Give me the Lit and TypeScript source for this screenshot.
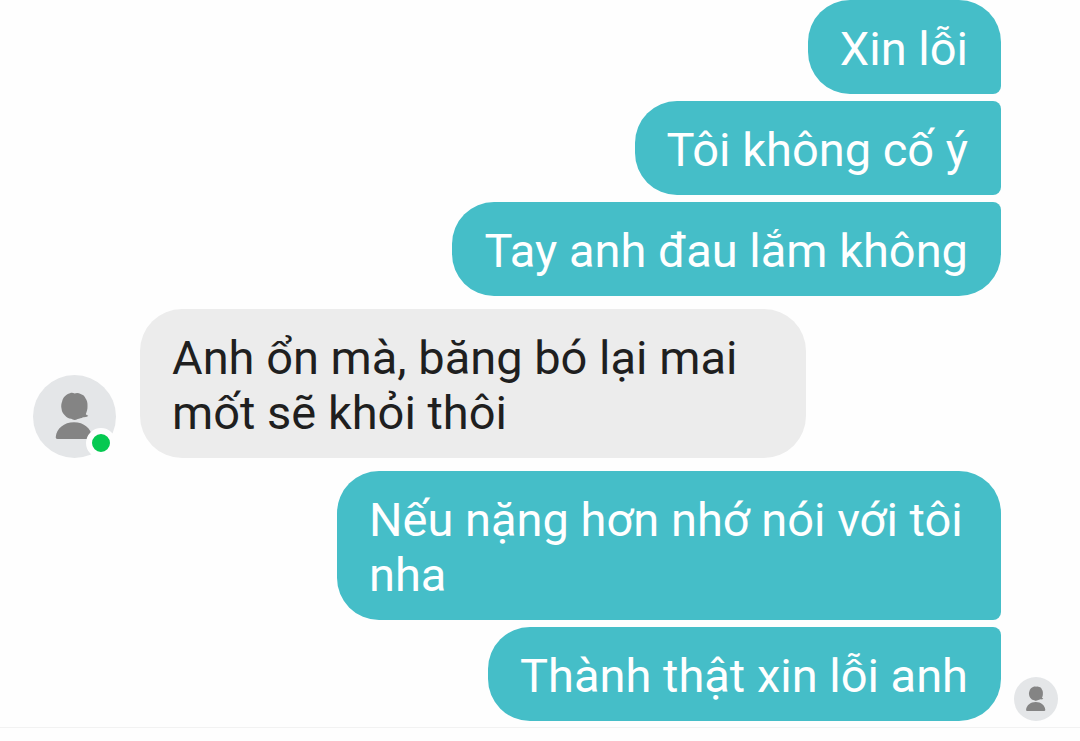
import { LitElement, html, css } from "lit";
import { customElement, property } from "lit/decorators.js";
import { classMap } from "lit/directives/class-map.js";

interface Group {
  from: "me" | "them";
  messages: string[];
  seen?: boolean;
}

const conversation: Group[] = [
  { from: "me", messages: ["Xin lỗi", "Tôi không cố ý", "Tay anh đau lắm không"] },
  { from: "them", messages: ["Anh ổn mà, băng bó lại mai mốt sẽ khỏi thôi"] },
  { from: "me", messages: ["Nếu nặng hơn nhớ nói với tôi nha", "Thành thật xin lỗi anh"], seen: true },
];

@customElement("chat-avatar")
export class ChatAvatar extends LitElement {
  @property({ type: Boolean }) online = false;

  static styles = css`
    :host {
      display: block;
      position: relative;
    }
    .face {
      display: block;
      width: 100%;
    }
    .status {
      position: absolute;
      right: 0;
      bottom: 0;
      box-sizing: border-box;
      width: 30px;
      height: 30px;
      border: 6px solid #fefefe;
      border-radius: 50%;
      background: #05c951;
    }
  `;

  render() {
    return html`
      <svg class="face" viewBox="0 0 83 83" aria-hidden="true">
        <circle cx="41.5" cy="41.5" r="41.5" fill="#e4e6e8" />
        <path
          fill="#848484"
          d="M37 18.2C38.6 17.5 40.2 17.8 41.6 18.4C43.6 17.5 46 17.8 47.6 19C50 19.6 51.8 21.2 52.6 23.6C54 25.6 54.7 28 54.5 31C54.7 34.4 53.6 37 52.8 39C53.4 40 54.3 40.4 55.3 40.6C54.8 41.8 52.6 42.4 50 42.2C48.4 43.4 46.4 43.4 44.6 44C42.6 45.3 40 45.2 38.2 43.8C35.6 43.4 33.4 42.2 32 40.4C30 39 28.8 36.6 28.5 33.6C27.9 31 28.3 28.4 29.2 26.2C29.8 22.8 32.6 19.4 37 18.2Z"
        />
        <path
          fill="#848484"
          d="M24.5 64C23.2 64 22.6 63.2 22.8 61.8C23.6 53.5 31 47.3 41 47.3C51 47.3 58.2 53.5 59 61.8C59.2 63.2 58.6 64 57.3 64Z"
        />
      </svg>
      ${this.online ? html`<span class="status"></span>` : null}
    `;
  }
}

@customElement("app-root")
export class AppRoot extends LitElement {
  static styles = css`
    :host {
      display: block;
      min-height: 100vh;
      background: #fefefe;
      font-family: Roboto, "Noto Sans", sans-serif;
      font-size: 47px;
      line-height: 55px;
    }
    .thread {
      display: flex;
      flex-direction: column;
      gap: 13px;
      padding-bottom: 6px;
      border-bottom: 1px solid #f2f2f2;
    }
    .group {
      display: grid;
      grid-template-columns: 83px minmax(0, 1fr) 44px;
      align-items: end;
      padding: 0 22px 0 33px;
    }
    .bubbles {
      grid-column: 2;
      display: flex;
      flex-direction: column;
      align-items: flex-start;
      gap: 7px;
      margin: 0 13px 0 24px;
      padding: 0;
      list-style: none;
    }
    .mine .bubbles {
      align-items: flex-end;
    }
    .bubble {
      box-sizing: border-box;
      max-width: min(100%, 666px);
      padding: 21px 33px 18px 32px;
      border-radius: 42px;
      background: #ececec;
      color: #1f1f1f;
    }
    .mine .bubble {
      max-width: min(100%, 664px);
      border-radius: 42px 8px 8px 42px;
      background: #45bec8;
      color: #ffffff;
    }
    .mine .bubble:first-child {
      border-top-right-radius: 42px;
    }
    .mine .bubble:last-child {
      border-bottom-right-radius: 42px;
    }
    .sender {
      grid-column: 1;
    }
    .seen {
      grid-column: 3;
    }
  `;

  render() {
    return html`
      <main class="thread">
        ${conversation.map(
          (group) => html`
            <section class=${classMap({ group: true, mine: group.from === "me" })}>
              ${group.from === "them" ? html`<chat-avatar class="sender" online></chat-avatar>` : null}
              <ul class="bubbles">
                ${group.messages.map((text) => html`<li class="bubble">${text}</li>`)}
              </ul>
              ${group.seen ? html`<chat-avatar class="seen"></chat-avatar>` : null}
            </section>
          `
        )}
      </main>
    `;
  }
}
